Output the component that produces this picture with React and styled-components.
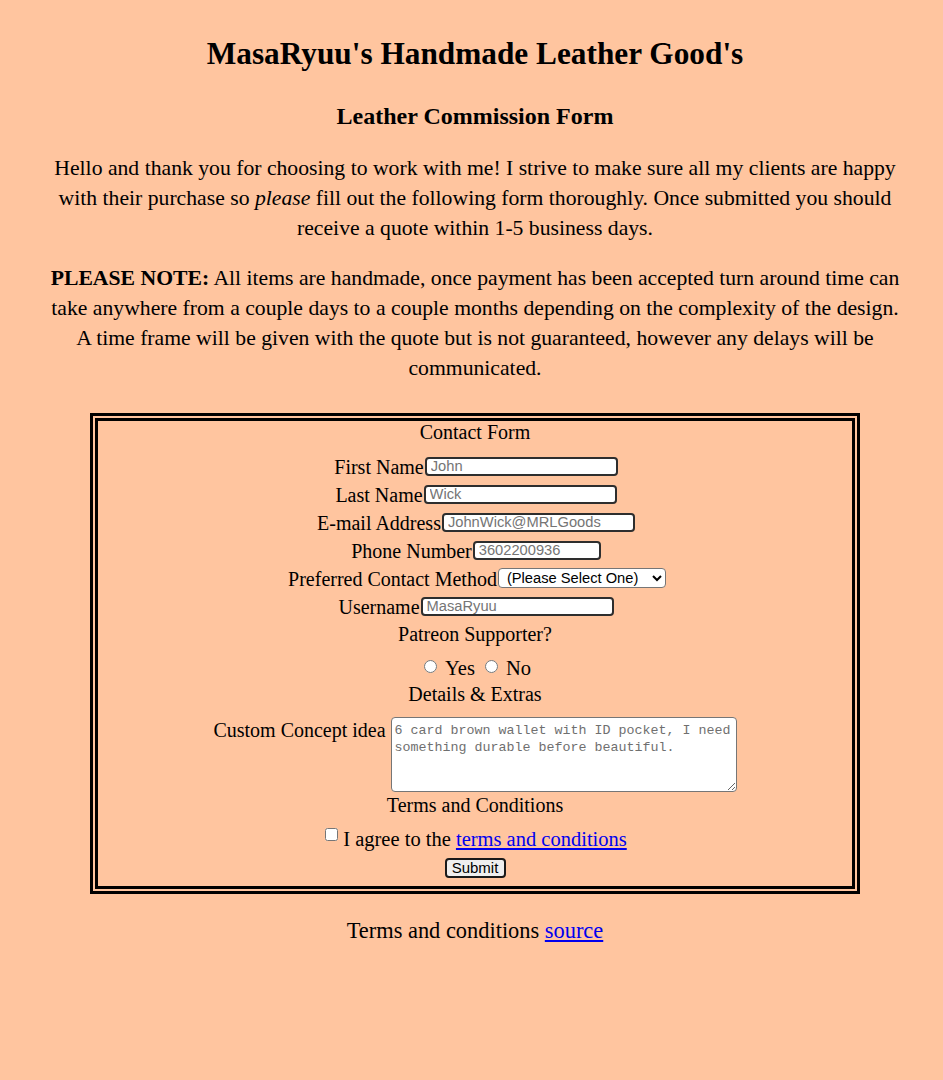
import React from "react";
import styled, { createGlobalStyle } from "styled-components";

const Global = createGlobalStyle`
  html, body { background: #ffc59f; }
  body {
    margin: 8px 0 8px 7px;
    font-family: "Liberation Serif", "Times New Roman", serif;
    color: #000;
  }
`;

const Page = styled.main`
  display: flex;
  flex-direction: column;
  align-items: center;
  text-align: center;
`;

const Title = styled.h1`
  font-size: 31.3px;
  font-weight: bold;
  margin: 26px 0 0;
  line-height: 40px;
`;

const Subtitle = styled.h2`
  font-size: 24px;
  font-weight: bold;
  margin: 27px 0 0;
  line-height: 30px;
`;

const Para = styled.p`
  font-size: 21.7px;
  line-height: 30px;
  margin: ${(p) => p.$mt || 0}px 0 0;
  white-space: nowrap;
`;

const Form = styled.form`
  width: 770px;
  box-sizing: border-box;
  border: 8px double #000;
  margin: 30px 0 0;
  padding: 0 0 4px;
  display: flex;
  flex-direction: column;
  align-items: center;
  font-size: 20px;
`;

const Heading = styled.div`
  height: ${(p) => p.$h || 28}px;
  line-height: ${(p) => p.$lh || 28}px;
  font-size: 20px;
`;

const Row = styled.div`
  display: flex;
  align-items: ${(p) => (p.$top ? "flex-start" : "center")};
  justify-content: center;
  height: ${(p) => p.$h || 28}px;
  padding-top: ${(p) => p.$pt || 0}px;
  padding-left: ${(p) => p.$pl || 0}px;
  box-sizing: border-box;
`;

const Label = styled.label`
  font-size: 20px;
  line-height: 22px;
  padding-top: ${(p) => p.$pt || 2}px;
  margin-right: ${(p) => p.$mr || 1}px;
`;

const Input = styled.input`
  width: ${(p) => p.$w || 193}px;
  height: 19px;
  box-sizing: border-box;
  border: 2px solid #2e2e2e;
  border-radius: 4px;
  background: #fff;
  padding: 0 4px;
  font-family: "Liberation Sans", Arial, sans-serif;
  font-size: 14.7px;
  color: #000;
  &::placeholder { color: #757575; }
`;

const Select = styled.select`
  width: 168px;
  height: 20px;
  box-sizing: border-box;
  border: 1px solid #767676;
  border-radius: 4px;
  background: #fff;
  font-family: "Liberation Sans", Arial, sans-serif;
  font-size: 14.7px;
  color: #000;
  padding: 0 4px;
`;

const Radio = styled.input.attrs({ type: "radio" })`
  width: 13px;
  height: 13px;
  margin: 0 8px 0 ${(p) => p.$ml || 0}px;
  position: relative;
  top: -2px;
`;

const Check = styled.input.attrs({ type: "checkbox" })`
  width: 13px;
  height: 13px;
  margin: 0 5px 0 0;
  position: relative;
  top: -4px;
`;

const Text = styled.span`
  font-size: 20.5px;
  line-height: 22px;
`;

const Area = styled.textarea`
  width: 346px;
  height: 75px;
  box-sizing: border-box;
  border: 1px solid #767676;
  border-radius: 4px;
  background: #fff;
  padding: 4px 3px 2px;
  font-family: "Liberation Mono", "Courier New", monospace;
  font-size: 13.33px;
  line-height: 17px;
  resize: both;
  &::placeholder { color: #6f6f6f; }
`;

const Link = styled.a`
  color: #0000ee;
  text-decoration: underline;
`;

const Button = styled.button`
  width: 61px;
  height: 20px;
  box-sizing: border-box;
  border: 2px solid #1a1a1a;
  border-radius: 4px;
  background: #efefef;
  font-family: "Liberation Sans", Arial, sans-serif;
  font-size: 15px;
  line-height: 16px;
  padding: 0;
  color: #000;
`;

const Footer = styled.p`
  font-size: 22.4px;
  line-height: 30px;
  margin: 22px 0 0;
`;

export default function App() {
  return (
    <>
      <Global />
      <Page>
        <Title>MasaRyuu's Handmade Leather Good's</Title>
        <Subtitle>Leather Commission Form</Subtitle>
        <Para $mt={22}>
          Hello and thank you for choosing to work with me! I strive to make sure all my clients are happy
          <br />
          with their purchase so <em>please</em> fill out the following form thoroughly. Once submitted you should
          <br />
          receive a quote within 1-5 business days.
        </Para>
        <Para $mt={20}>
          <b>PLEASE NOTE:</b> All items are handmade, once payment has been accepted turn around time can
          <br />
          take anywhere from a couple days to a couple months depending on the complexity of the design.
          <br />
          A time frame will be given with the quote but is not guaranteed, however any delays will be
          <br />
          communicated.
        </Para>
        <Form onSubmit={(e) => e.preventDefault()}>
          <Heading $h={31} $lh={22}>Contact Form</Heading>
          <Row $pl={2}>
            <Label>First Name</Label>
            <Input placeholder="John" />
          </Row>
          <Row $pl={2}>
            <Label>Last Name</Label>
            <Input placeholder="Wick" />
          </Row>
          <Row $pl={2}>
            <Label>E-mail Address</Label>
            <Input placeholder="JohnWick@MRLGoods" />
          </Row>
          <Row $pl={2}>
            <Label>Phone Number</Label>
            <Input $w={128} placeholder="3602200936" />
          </Row>
          <Row $pl={4}>
            <Label>Preferred Contact Method</Label>
            <Select defaultValue="">
              <option value="">(Please Select One)</option>
              <option>E-mail</option>
              <option>Phone</option>
            </Select>
          </Row>
          <Row $pl={2}>
            <Label>Username</Label>
            <Input placeholder="MasaRyuu" />
          </Row>
          <Heading $h={34} $lh={28}>Patreon Supporter?</Heading>
          <Row $pl={3}>
            <Radio name="patreon" $ml={2} />
            <Text>Yes</Text>
            <Radio name="patreon" $ml={10} />
            <Text>No</Text>
          </Row>
          <Heading $h={35} $lh={24}>Details &amp; Extras</Heading>
          <Row $h={77} $top>
            <Label $pt={2} $mr={5}>Custom Concept idea</Label>
            <Area placeholder="6 card brown wallet with ID pocket, I need something durable before beautiful." />
          </Row>
          <Heading $h={31} $lh={22}>Terms and Conditions</Heading>
          <Row $h={27} $pl={2}>
            <Check />
            <Text>
              I agree to the <Link href="#">terms and conditions</Link>
            </Text>
          </Row>
          <Row $h={30} $pt={2}>
            <Button type="submit">Submit</Button>
          </Row>
        </Form>
        <Footer>
          Terms and conditions <Link href="#">source</Link>
        </Footer>
      </Page>
    </>
  );
}
